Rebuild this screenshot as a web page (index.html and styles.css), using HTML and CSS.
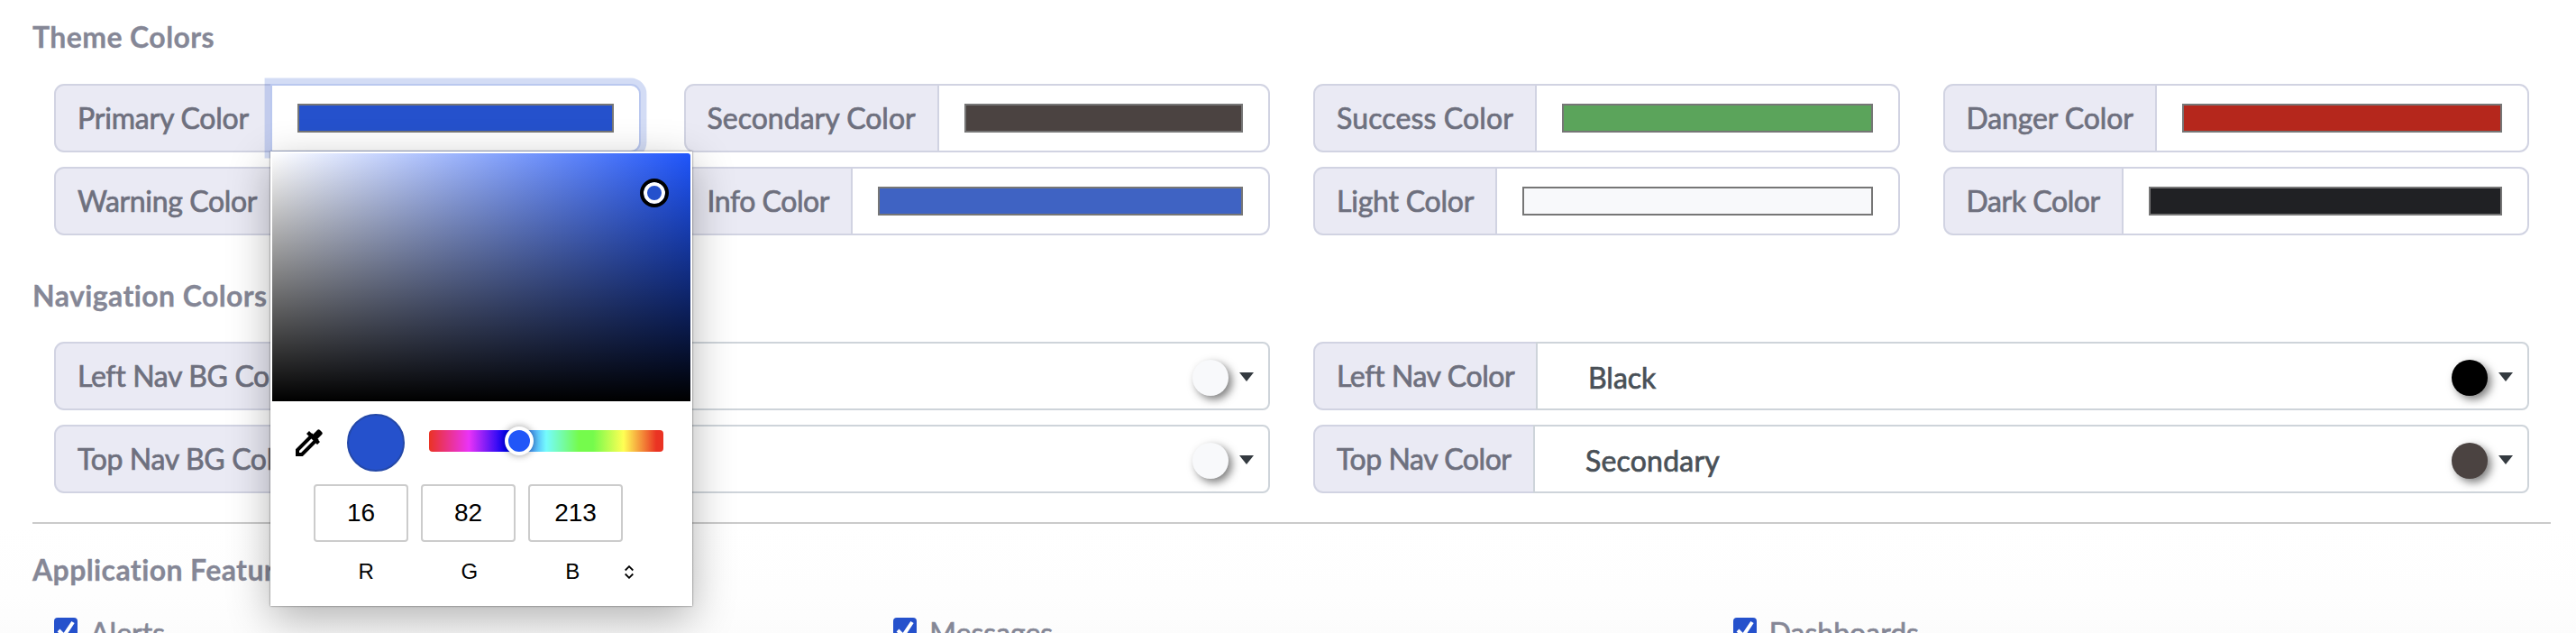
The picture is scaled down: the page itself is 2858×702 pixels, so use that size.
FILE: index.html
```html
<!DOCTYPE html>
<html lang="en">
<head>
  <meta charset="UTF-8" />
  <meta name="viewport" content="width=device-width, initial-scale=1.0"/>
  <title>Theme Settings</title>
  <link rel="stylesheet" href="styles.css">
</head>
<body>
  <main class="settings">
    <h2>Theme Colors</h2>
    <div class="color-grid">
      <div class="input-group">
        <span class="group-label primary">Primary Color</span>
        <div class="color-input focused"><div class="swatch bg-primary"></div></div>
      </div>
      <div class="input-group">
        <span class="group-label secondary">Secondary Color</span>
        <div class="color-input"><div class="swatch bg-secondary"></div></div>
      </div>
      <div class="input-group">
        <span class="group-label success">Success Color</span>
        <div class="color-input"><div class="swatch bg-success"></div></div>
      </div>
      <div class="input-group">
        <span class="group-label danger">Danger Color</span>
        <div class="color-input"><div class="swatch bg-danger"></div></div>
      </div>
      <div class="input-group">
        <span class="group-label warning">Warning Color</span>
        <div class="color-input"></div>
      </div>
      <div class="input-group">
        <span class="group-label info">Info Color</span>
        <div class="color-input"><div class="swatch bg-info"></div></div>
      </div>
      <div class="input-group">
        <span class="group-label light">Light Color</span>
        <div class="color-input"><div class="swatch bg-light"></div></div>
      </div>
      <div class="input-group">
        <span class="group-label dark">Dark Color</span>
        <div class="color-input"><div class="swatch bg-dark"></div></div>
      </div>
    </div>

    <h2 class="nav-heading">Navigation Colors</h2>
    <div class="nav-grid">
      <div class="input-group">
        <span class="group-label nav-bg">Left Nav BG Color</span>
        <div class="select"><span class="value"></span><span class="dot bg-light"></span><span class="caret"></span></div>
      </div>
      <div class="input-group">
        <span class="group-label left-nav">Left Nav Color</span>
        <div class="select"><span class="value">Black</span><span class="dot bg-black"></span><span class="caret"></span></div>
      </div>
      <div class="input-group">
        <span class="group-label nav-bg">Top Nav BG Color</span>
        <div class="select"><span class="value"></span><span class="dot bg-light"></span><span class="caret"></span></div>
      </div>
      <div class="input-group">
        <span class="group-label top-nav">Top Nav Color</span>
        <div class="select"><span class="value wide">Secondary</span><span class="dot bg-secondary"></span><span class="caret"></span></div>
      </div>
    </div>

    <hr>

    <h2 class="features-heading">Application Features</h2>
    <div class="features">
      <div class="check">
        <svg width="26" height="26" viewBox="0 0 26 26"><rect width="26" height="26" rx="4" fill="#2551cc"/><path d="M5 14l6 6L21 5" fill="none" stroke="#fff" stroke-width="4"/></svg>
        <span>Alerts</span>
      </div>
      <div class="check">
        <svg width="26" height="26" viewBox="0 0 26 26"><rect width="26" height="26" rx="4" fill="#2551cc"/><path d="M5 14l6 6L21 5" fill="none" stroke="#fff" stroke-width="4"/></svg>
        <span>Messages</span>
      </div>
      <div class="check">
        <svg width="26" height="26" viewBox="0 0 26 26"><rect width="26" height="26" rx="4" fill="#2551cc"/><path d="M5 14l6 6L21 5" fill="none" stroke="#fff" stroke-width="4"/></svg>
        <span>Dashboards</span>
      </div>
    </div>
  </main>

  <!-- color picker popup -->
  <div class="picker">
    <div class="shade"><span class="shade-handle"></span></div>
    <div class="picker-row">
      <svg class="dropper" width="30" height="30" viewBox="0 0 30 30">
        <path d="M2 28v-5L18 7l5 5L7 28z" fill="none" stroke="#000" stroke-width="4"/>
        <path d="M0 30v-6l6 6z"/>
        <path d="M12 5l3-3 4 4 5-5q1.500-1.500 3 0l2 2q1.500 1.500 0 3l-5 5 3 3-3 3z"/>
      </svg>
      <div class="preview"></div>
      <div class="hue"><span class="hue-handle"></span></div>
    </div>
    <div class="channels">
      <div class="channel">16</div>
      <div class="channel">82</div>
      <div class="channel">213</div>
    </div>
    <div class="channel-names">
      <span>R</span>
      <span>G</span>
      <span>B</span>
      <svg width="10" height="15" viewBox="0 0 10 15"><path d="M.7 5.500L5 1.200l4.300 4.300M.7 9.500L5 13.800l4.300-4.300" fill="none" stroke="#000" stroke-width="1.800"/></svg>
    </div>
  </div>
</body>
</html>
```
FILE: styles.css
```css
* { box-sizing: border-box; }
body {
  margin: 0;
  height: 702px;
  overflow: hidden;
  position: relative;
  font-family: Lato, sans-serif;
  font-size: 32px;
  line-height: 38px;
  color: #858796;
  background: linear-gradient(#fff 580px, #fefefe 660px, #fcfcfc 702px);
}
.settings { padding: 22px 28px 0 36px; }
h2 {
  margin: 0 0 33px;
  font-size: 32px;
  line-height: 38px;
  font-weight: 700;
  letter-spacing: 0.4px;
  -webkit-text-stroke: 0.3px #858796;
}
.nav-heading { margin: 48px 0 32px; }
.features-heading { margin: 32px 0 32px; }
hr {
  margin: 32px 0 0;
  border: 0;
  height: 2px;
  background: #cbcbcb;
}

.color-grid, .nav-grid {
  display: grid;
  gap: 16px 48px;
  padding: 0 24px;
}
.color-grid { grid-template-columns: repeat(4, 1fr); }
.nav-grid { grid-template-columns: repeat(2, 1fr); }

.input-group { display: flex; height: 76px; }
.group-label {
  display: flex;
  align-items: center;
  flex: none;
  padding: 0 0 0 24px;
  white-space: nowrap;
  color: #6e707e;
  -webkit-text-stroke: 0.7px #6e707e;
  background: #eaeaf4;
  border: 2px solid #d1d3e2;
  border-radius: 11px 0 0 11px;
}
.primary { width: 242px; letter-spacing: -0.2px; }
.secondary { width: 283.5px; letter-spacing: 0.01px; }
.success { width: 248px; letter-spacing: 0.15px; }
.danger { width: 237.5px; letter-spacing: -0.12px; }
.warning { width: 251px; letter-spacing: -0.35px; }
.info { width: 187.5px; letter-spacing: -0.45px; }
.light { width: 204px; letter-spacing: -0.22px; }
.dark { width: 200.5px; letter-spacing: -0.42px; }
.nav-bg { width: 306px; letter-spacing: -0.35px; }
.left-nav { width: 249px; letter-spacing: -0.4px; }
.top-nav { width: 246px; letter-spacing: -0.44px; }

.color-input {
  flex: 1;
  margin-left: -2px;
  padding: 20px 28px;
  background: #fff;
  border: 2px solid #d1d3e2;
  border-radius: 0 11px 11px 0;
}
.focused {
  border-color: #bac8ef;
  box-shadow: 0 0 0 6.4px rgba(37, 81, 204, 0.2);
  z-index: 1;
}
.swatch { height: 32px; border: 2px solid #767676; }
.bg-primary { background: #2551cc; }
.bg-secondary { background: #4b4341; }
.bg-success { background: #5ba45b; }
.bg-danger { background: #b5271c; }
.bg-info { background: #3f63c3; }
.bg-light { background: #f8f9fb; }
.bg-dark { background: #202124; }
.bg-black { background: #000; }

.select {
  display: flex;
  align-items: center;
  flex: 1;
  margin-left: -2px;
  padding: 0 16px 0 56px;
  color: #495057;
  background: #fff;
  border: 2px solid #ced4da;
  border-radius: 0 8px 8px 0;
}
.value {
  flex: 1;
  padding-top: 4px;
  -webkit-text-stroke: 0.7px #495057;
}
.value.wide { letter-spacing: 0.2px; }
.dot {
  width: 40px;
  height: 40px;
  margin-top: 4px;
  border-radius: 50%;
  box-shadow: 4px 4px 10px rgba(0, 0, 0, 0.5);
}
.caret {
  margin: 2px 0 0 12px;
  border: 8px solid transparent;
  border-top: 10px solid #343a40;
  border-bottom: 0;
}

.features { display: grid; grid-template-columns: repeat(3, 1fr); }
.check {
  display: flex;
  gap: 14px;
  padding-left: 24px;
  -webkit-text-stroke: 0.7px #858796;
}
.check svg { margin-top: 2px; }

.picker {
  position: absolute;
  left: 300px;
  top: 168px;
  width: 468px;
  height: 504px;
  padding: 2px;
  z-index: 5;
  color: #000;
  font-family: "Liberation Sans", Arial, sans-serif;
  background: #fff;
  box-shadow: 0 0 2px rgba(0, 0, 0, 0.6), 0 14px 44px rgba(0, 0, 0, 0.3);
}
.shade {
  position: relative;
  height: 275px;
  border-radius: 0 3px 0 0;
  background: linear-gradient(to top, #000, transparent), linear-gradient(to right, #fff, #1f55fb);
}
.shade-handle {
  position: absolute;
  left: 408px;
  top: 28px;
  width: 32px;
  height: 32px;
  border: 4px solid #000;
  border-radius: 50%;
  background: #2551cc;
  box-shadow: inset 0 0 0 4px #fff;
}
.picker-row {
  display: flex;
  align-items: flex-start;
  height: 64px;
  margin-top: 14px;
  padding: 0 30px 0 26px;
}
.dropper { margin-top: 17px; }
.preview {
  width: 64px;
  height: 64px;
  margin: 0 27px;
  border: 2px solid #2448a8;
  border-radius: 50%;
  background: #2551cc;
}
.hue {
  position: relative;
  flex: 1;
  height: 24px;
  margin-top: 18px;
  border-radius: 4px;
  background: linear-gradient(to right, #ea3323, #ea33f7 17%, #0000f5 33%, #75fbfd 50%, #75fb4c 64%, #75fb4c 70%, #ffff54 83%, #ea3323 97%);
}
.hue-handle {
  position: absolute;
  left: 84px;
  top: -4px;
  width: 32px;
  height: 32px;
  border: 4px solid #fff;
  border-radius: 50%;
  background: #2156f8;
  box-shadow: 0 0 8px rgba(0, 0, 0, 0.4);
}
.channels {
  display: flex;
  gap: 14px;
  margin-top: 14px;
  padding-left: 46px;
}
.channel {
  width: 105px;
  height: 64px;
  border: 2px solid #ccc;
  border-radius: 4px;
  text-align: center;
  font-size: 28px;
  line-height: 59px;
}
.channel-names {
  display: flex;
  align-items: center;
  margin-top: 14px;
  padding-left: 47px;
  font-size: 24px;
}
.channel-names span { width: 114.5px; text-align: center; }
```
